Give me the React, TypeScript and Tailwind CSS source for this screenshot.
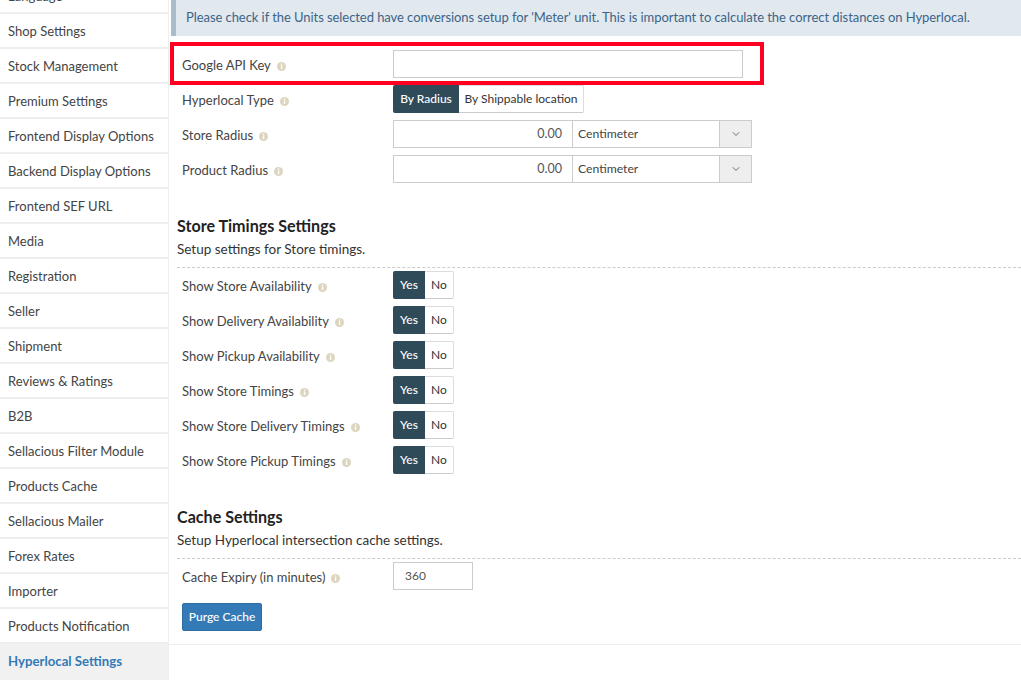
import { ChevronDown } from 'lucide-react';

const menuItems = [
  'Language',
  'Shop Settings',
  'Stock Management',
  'Premium Settings',
  'Frontend Display Options',
  'Backend Display Options',
  'Frontend SEF URL',
  'Media',
  'Registration',
  'Seller',
  'Shipment',
  'Reviews & Ratings',
  'B2B',
  'Sellacious Filter Module',
  'Products Cache',
  'Sellacious Mailer',
  'Forex Rates',
  'Importer',
  'Products Notification',
];

const timingRows = [
  'Show Store Availability',
  'Show Delivery Availability',
  'Show Pickup Availability',
  'Show Store Timings',
  'Show Store Delivery Timings',
  'Show Store Pickup Timings',
];

function InfoDot() {
  return (
    <svg className="ml-[6px] mt-[1px] h-[9px] w-[9px] shrink-0" viewBox="0 0 9 9">
      <circle cx="4.5" cy="4.5" r="4.5" fill="#dcd5bf" />
      <rect x="3.9" y="1.4" width="1.3" height="1.3" fill="#fff" />
      <rect x="3.9" y="3.4" width="1.3" height="3.6" fill="#fff" />
    </svg>
  );
}

function Label({ text }: { text: string }) {
  return (
    <div className="flex h-[28px] w-[216px] shrink-0 items-center pl-[5px] pt-[3px] text-[13px] text-[#444]">
      <span>{text}</span>
      <InfoDot />
    </div>
  );
}

function RadiusField() {
  return (
    <div className="flex h-[28px] w-[359px] border border-[#ccc] text-[12.2px] text-[#555]">
      <div className="flex w-[179px] items-center justify-end border-r border-[#ccc] pr-[10px] text-[12.5px]">0.00</div>
      <div className="flex flex-1 items-center pl-[5px] text-[#444]">Centimeter</div>
      <div className="flex w-[32px] items-center justify-center border-l border-[#ccc] bg-[#eee]">
        <ChevronDown className="h-[12px] w-[12px] text-[#444]" strokeWidth={1.5} />
      </div>
    </div>
  );
}

function YesNo() {
  return (
    <div className="flex h-[28px] w-[61px] rounded-[2px] border border-[#ddd] border-b-[#ccc] text-[12px]">
      <div className="-m-px flex h-[28px] w-[32px] items-center justify-center rounded-l-[2px] bg-[#2f4b5a] font-medium text-white">
        Yes
      </div>
      <div className="flex flex-1 items-center justify-center pl-px text-[#333]">No</div>
    </div>
  );
}

function SectionHeading({ title, subtitle }: { title: string; subtitle: string }) {
  return (
    <div>
      <h3 className="text-[16.1px] font-bold leading-[20px] text-[#222]">{title}</h3>
      <p className="mt-[3px] text-[13.5px] leading-[20px] text-[#333]">{subtitle}</p>
    </div>
  );
}

export default function App() {
  return (
    <div className="relative flex h-[689px] w-[1021px] overflow-hidden bg-white font-['Lato','Open_Sans',sans-serif]">
      <aside className="-mt-[21px] h-[701px] w-[169px] shrink-0 border-r border-[#eee]">
        {menuItems.map(item => (
          <div key={item} className="flex h-[35px] items-center border-b-2 border-[#eee] pl-2 pt-[2px] text-[13px] text-[#444]">
            {item}
          </div>
        ))}
        <div className="flex h-[36px] items-center bg-[#f1f1f1] pl-2 text-[13.2px] font-bold text-[#337ab7]">Hyperlocal Settings</div>
      </aside>

      <main className="min-w-0 flex-1">
        <div className="ml-[2px] flex h-[36px] items-center whitespace-nowrap border-l-[5px] border-[#a9bccb] bg-[#e1e9ef] pl-[10px] text-[13px] tracking-[-0.065px] text-[#3d6488]">
          Please check if the Units selected have conversions setup for 'Meter' unit. This is important to calculate the correct distances on Hyperlocal.
        </div>

        <div className="mt-[14px] pl-[8px]">
          <div className="flex h-[35px]">
            <Label text="Google API Key" />
            <div className="h-[28px] w-[350px] border border-[#ccc]" />
          </div>
          <div className="flex h-[35px]">
            <Label text="Hyperlocal Type" />
            <div className="flex h-[28px] w-[191px] rounded-[2px] border border-[#ddd] border-b-[#ccc] text-[12px]">
              <div className="-m-px flex h-[28px] w-[66px] items-center justify-center rounded-l-[2px] bg-[#2f4b5a] font-medium text-white">
                By Radius
              </div>
              <div className="flex flex-1 items-center justify-center pl-px text-[#333]">By Shippable location</div>
            </div>
          </div>
          <div className="flex h-[35px]">
            <Label text="Store Radius" />
            <RadiusField />
          </div>
          <div className="flex h-[35px]">
            <Label text="Product Radius" />
            <RadiusField />
          </div>
        </div>

        <div className="mt-[26px] pl-[8px]">
          <SectionHeading title="Store Timings Settings" subtitle="Setup settings for Store timings." />
          <div className="mb-[3px] mt-[8px] border-t border-dashed border-[#ccc]" />
          {timingRows.map(row => (
            <div key={row} className="flex h-[35px]">
              <Label text={row} />
              <YesNo />
            </div>
          ))}
        </div>

        <div className="mt-[26px] pl-[8px]">
          <SectionHeading title="Cache Settings" subtitle="Setup Hyperlocal intersection cache settings." />
          <div className="mb-[3px] mt-[8px] border-t border-dashed border-[#ccc]" />
          <div className="flex h-[28px]">
            <Label text="Cache Expiry (in minutes)" />
            <div className="flex w-[80px] items-center border border-[#ccc] pl-[11px] text-[12px] text-[#555]">360</div>
          </div>
          <button className="ml-[5px] mt-[13px] block h-[28px] w-[80px] rounded-[2px] border border-[#2e6da4] bg-[#337ab7] text-[12px] font-medium text-white">
            Purge Cache
          </button>
        </div>
        <div className="mt-[13px] border-t border-[#eee]" />
      </main>

      <div className="pointer-events-none absolute left-[170px] top-[42px] h-[43px] w-[594px] border-[4px] border-[#ff0022]" />
    </div>
  );
}
